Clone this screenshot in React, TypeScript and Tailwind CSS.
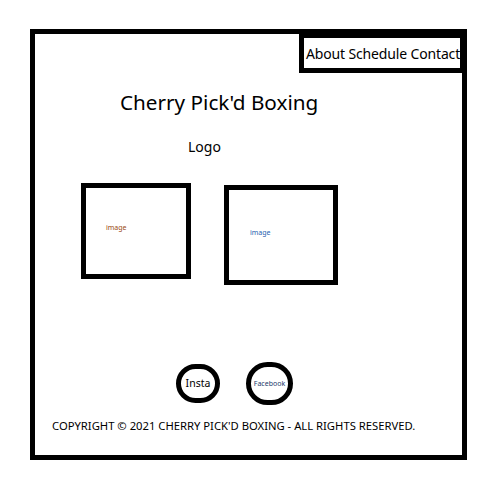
export default function App() {
  return (
    <div className="w-[492px] h-[490px] bg-white pt-[29px] pl-[30px] font-['Noto_Sans',sans-serif] text-black">
      <div className="w-[437px] h-[431px] border-[5px] border-black flex flex-col">
        {/* Nav */}
        <div className="self-end w-[163px] h-[39px] border-l-[5px] border-b-[5px] border-t-[4px] border-r-[2px] border-black flex items-center pl-[2px] overflow-hidden">
          <span className="text-[14px] whitespace-nowrap tracking-[-0.15px]">About Schedule Contact</span>
        </div>

        {/* Title */}
        <h1 className="ml-[85px] mt-[19px] text-[20.7px] leading-none whitespace-nowrap">Cherry Pick'd Boxing</h1>
        <p className="ml-[153px] mt-[27px] text-[14px] leading-none">Logo</p>

        {/* Images */}
        <div className="ml-[46px] mt-[29px] flex items-start gap-[33px]">
          <div className="w-[110px] h-[96px] border-[5px] border-black pl-[20px] pt-[36px]">
            <span className="block text-[7px] leading-none text-[#9a4a12]">image</span>
          </div>
          <div className="mt-[2px] w-[114px] h-[100px] border-[5px] border-black pl-[21px] pt-[39px]">
            <span className="block text-[7px] leading-none text-[#1f5fb0]">image</span>
          </div>
        </div>

        {/* Socials */}
        <div className="ml-[141px] mt-[77px] flex items-center gap-[26px]">
          <div className="w-[44px] h-[39px] rounded-full border-[5px] border-black flex items-center justify-center">
            <span className="text-[10.5px] leading-none">Insta</span>
          </div>
          <div className="w-[47px] h-[43px] rounded-full border-[5px] border-black flex items-center justify-center">
            <span className="text-[7px] leading-none text-[#1b3a6b]">Facebook</span>
          </div>
        </div>

        {/* Footer */}
        <p className="ml-[17px] mt-[15px] text-[11.25px] leading-none whitespace-nowrap">
          COPYRIGHT © 2021 CHERRY PICK'D BOXING - ALL RIGHTS RESERVED.
        </p>
      </div>
    </div>
  );
}
